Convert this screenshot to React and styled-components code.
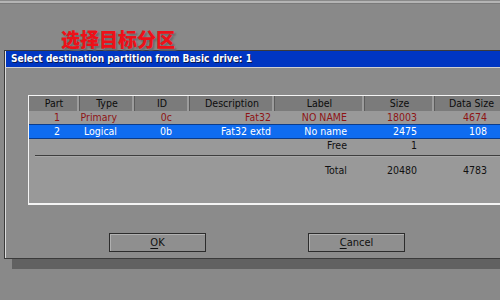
import React from "react";
import styled, { createGlobalStyle } from "styled-components";

const GlobalStyle = createGlobalStyle`
  html, body {
    margin: 0;
    padding: 0;
    background: #898989;
    overflow: hidden;
  }
`;

const Screen = styled.div`
  width: 500px;
  height: 300px;
  overflow: hidden;
  background: #898989;
  font-family: "DejaVu Sans Condensed", "DejaVu Sans", sans-serif;
`;

const TopRule = styled.div`
  height: 2px;
  margin-top: 1px;
  background: #b4b4b4;
  border-bottom: 1px solid #7a7a7a;
`;

const Heading = styled.div`
  height: 46px;
  padding-left: 61px;
  box-sizing: border-box;
  padding-top: 23px;
  font-family: "Noto Sans CJK SC", sans-serif;
  font-weight: 900;
  font-size: 19px;
  line-height: 24px;
  color: #ee1018;
  text-shadow: 2px 2px 2px #6a6a6a;
`;

const Dialog = styled.div`
  margin-left: 4px;
  width: 530px;
  height: 209px;
  box-sizing: border-box;
  border-left: 1px solid #3a3a3a;
  border-top: 1px solid #3a3a3a;
  border-bottom: 1px solid #3a3a3a;
  background: #8b8b8b;
  box-shadow: 8px 10px 0 #616161;
  display: flex;
  flex-direction: column;
`;

const TitleBar = styled.div`
  height: 16px;
  background: #0036c2;
  border-left: 1px solid #e8e8e8;
  border-bottom: 1px solid #d0d0d0;
  color: #ffffff;
  font-weight: 700;
  font-size: 10px;
  line-height: 16px;
  padding-left: 5px;
  letter-spacing: 0.05px;
  text-shadow: 1px 1px 0 #0a1a50;
  white-space: nowrap;
`;

const Body = styled.div`
  flex: 1;
  border-left: 1px solid #dcdcdc;
  padding: 27px 0 0 22px;
  display: flex;
  flex-direction: column;
`;

const Panel = styled.div`
  height: 107px;
  background: #999999;
  border-top: 1px solid #f4f4f4;
  border-left: 1px solid #f4f4f4;
  border-bottom: 2px solid #f4f4f4;
  font-size: 10.5px;
`;

const Row = styled.div`
  display: grid;
  grid-template-columns: 51px 55px 55px 85px 90px 70px 74px;
  height: ${(p) => p.$h || 13}px;
  line-height: ${(p) => p.$h || 13}px;
  color: ${(p) => p.$color || "#111"};
  background: ${(p) => p.$bg || "transparent"};
  border-top: ${(p) => (p.$selected ? "1px solid #0a3c8c" : "none")};
  border-bottom: ${(p) => (p.$selected ? "1px solid #0a3c8c" : "none")};
  margin-top: ${(p) => p.$mt || 0}px;
`;

const HeadRow = styled(Row)`
  background: #7b7b7b;
  color: #0c0c0c;
  height: 15px;
  line-height: 15px;
`;

const HeadCell = styled.div`
  text-align: center;
  border-right: 1px solid #5c5c5c;
  box-shadow: inset -2px 0 0 #9c9c9c;
  white-space: nowrap;
`;

const Cell = styled.div`
  text-align: right;
  padding-right: ${(p) => (p.$pad !== undefined ? p.$pad : 18)}px;
  white-space: nowrap;
`;

const Divider = styled.div`
  margin: 4px 0 0 6px;
  height: 1px;
  background: #3e3e3e;
  border-bottom: 1px solid #a8a8a8;
`;

const Buttons = styled.div`
  display: flex;
  gap: 102px;
  margin: 28px 0 0 81px;
`;

const Button = styled.div`
  width: 95px;
  height: 17px;
  border: 1px solid #2c2c2c;
  box-shadow: inset 1px 1px 0 #b0b0b0;
  background: #8f8f8f;
  color: #101010;
  font-size: 11px;
  line-height: 18px;
  text-align: center;
  u {
    text-underline-offset: 2px;
  }
`;

const columns = ["Part", "Type", "ID", "Description", "Label", "Size", "Data Size"];

const partitions = [
  { part: "1", type: "Primary", id: "0c", desc: "Fat32", label: "NO NAME", size: "18003", data: "4674" },
  { part: "2", type: "Logical", id: "0b", desc: "Fat32 extd", label: "No name", size: "2475", data: "108" },
];

const PartitionRow = ({ p, selected }) => (
  <Row
    $color={selected ? "#ffffff" : "#8e1414"}
    $bg={selected ? "#0f6cf0" : "transparent"}
    $selected={selected}
  >
    <Cell $pad={20}>{p.part}</Cell>
    <Cell>{p.type}</Cell>
    <Cell>{p.id}</Cell>
    <Cell $pad={4}>{p.desc}</Cell>
    <Cell>{p.label}</Cell>
    <Cell>{p.size}</Cell>
    <Cell $pad={22}>{p.data}</Cell>
  </Row>
);

export default function App() {
  return (
    <Screen>
      <GlobalStyle />
      <TopRule />
      <Heading>选择目标分区</Heading>
      <Dialog>
        <TitleBar>Select destination partition from Basic drive: 1</TitleBar>
        <Body>
          <Panel>
            <HeadRow>
              {columns.map((c) => (
                <HeadCell key={c}>{c}</HeadCell>
              ))}
            </HeadRow>
            <PartitionRow p={partitions[0]} />
            <PartitionRow p={partitions[1]} selected />
            <Row $h={12}>
              <Cell />
              <Cell />
              <Cell />
              <Cell />
              <Cell>Free</Cell>
              <Cell>1</Cell>
              <Cell />
            </Row>
            <Divider />
            <Row $h={13} $mt={7}>
              <Cell />
              <Cell />
              <Cell />
              <Cell />
              <Cell>Total</Cell>
              <Cell>20480</Cell>
              <Cell $pad={22}>4783</Cell>
            </Row>
          </Panel>
          <Buttons>
            <Button>
              <u>O</u>K
            </Button>
            <Button>
              <u>C</u>ancel
            </Button>
          </Buttons>
        </Body>
      </Dialog>
    </Screen>
  );
}
